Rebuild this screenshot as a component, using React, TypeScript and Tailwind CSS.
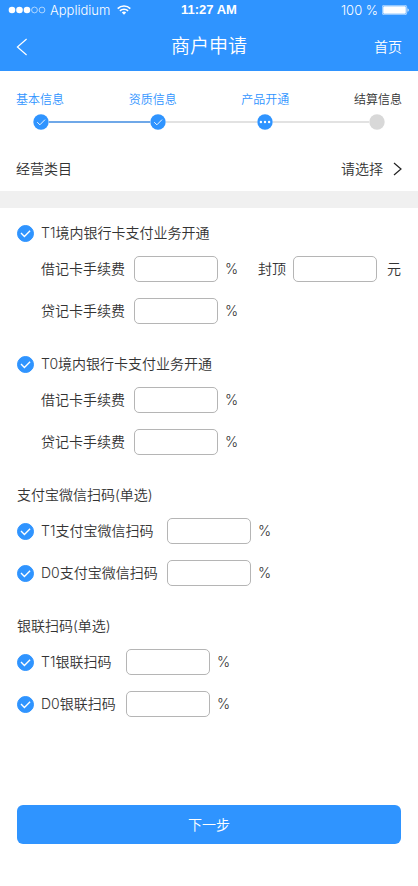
import { useState } from "react";

const steps = [
  { label: "基本信息", status: "done" },
  { label: "资质信息", status: "done" },
  { label: "产品开通", status: "current" },
  { label: "结算信息", status: "todo" },
];

const lines = ["flex-[101] bg-[#6fa8e8]", "flex-[92] bg-[#e2e2e2]", "flex-[96] bg-[#e2e2e2]"];

const StatusBar = () => (
  <div className="grid h-5 grid-cols-[1fr_auto_1fr] items-center px-2 text-[13px] font-light">
    <div className="flex items-center">
      <svg width="38" height="8" viewBox="0 0 38 8" fill="#fff" stroke="#fff">
        <circle cx="4" cy="4" r="3.3" stroke="none" />
        <circle cx="11.5" cy="4" r="3.3" stroke="none" />
        <circle cx="19" cy="4" r="3.3" stroke="none" />
        <circle cx="26.5" cy="4" r="2.9" fill="none" strokeWidth="0.6" />
        <circle cx="34" cy="4" r="2.9" fill="none" strokeWidth="0.6" />
      </svg>
      <span className="ml-1">Applidium</span>
      <svg className="ml-[7px]" width="14" height="10" viewBox="0 0 14 10" fill="none" stroke="#fff" strokeWidth="1.6">
        <path d="M0.7 3.6a9 9 0 0 1 12.6 0M2.9 5.9a5.9 5.9 0 0 1 8.2 0" />
        <path d="M7 9.8 4.8 7.6a3.2 3.2 0 0 1 4.4 0z" fill="#fff" stroke="none" />
      </svg>
    </div>
    <span className="font-['Liberation_Sans',sans-serif] font-bold">11:27 AM</span>
    <div className="flex items-center justify-end">
      <span>100 %</span>
      <svg className="ml-1" width="28" height="10" viewBox="0 0 28 10" fill="#fff">
        <rect x="0.3" y="0.3" width="24.4" height="9.4" rx="1.6" fill="none" stroke="#fff" strokeWidth="0.6" />
        <rect x="1.2" y="1.2" width="22.6" height="7.6" rx="0.8" />
        <path d="M25.6 3.2c1.4.4 1.4 3.2 0 3.6z" />
      </svg>
    </div>
  </div>
);

const StepDot = ({ status }: { status: string }) => (
  <svg className="shrink-0" width="16" height="16" viewBox="0 0 16 16" fill="none">
    <circle cx="8" cy="8" r="7.7" fill={status === "todo" ? "#d8d8d8" : "#2f94ff"} />
    {status === "done" && <path d="M4.2 8.2l2.7 2.6 5.1-5.2" stroke="#fff" strokeWidth="0.9" />}
    {status === "current" && (
      <g fill="#fff">
        <circle cx="3.9" cy="8" r="1.2" />
        <circle cx="8" cy="8" r="1.2" />
        <circle cx="12.1" cy="8" r="1.2" />
      </g>
    )}
  </svg>
);

const Check = ({ id }: { id: string }) => {
  const [checked, setChecked] = useState(true);
  return (
    <span className="mr-[7px] grid size-[17px] shrink-0">
      <input
        id={id}
        type="checkbox"
        checked={checked}
        onChange={(e) => setChecked(e.target.checked)}
        className="col-start-1 row-start-1 size-[17px] appearance-none rounded-full border border-[#b5b5b5] checked:border-[#2f94ff] checked:bg-[#2f94ff]"
      />
      {checked && (
        <svg className="pointer-events-none col-start-1 row-start-1" width="17" height="17" viewBox="0 0 17 17" fill="none">
          <path d="M4 8.1l3.4 3.3 5.7-5.6" stroke="#fff" strokeWidth="1.4" />
        </svg>
      )}
    </span>
  );
};

const RateInput = ({ id, label }: { id?: string; label?: string }) => (
  <input
    id={id}
    aria-label={label}
    type="text"
    inputMode="decimal"
    className="h-[26px] w-[84px] shrink-0 rounded-[5px] border border-[#b5b5b5] bg-white px-2 focus:border-[#2f94ff] focus:outline-none"
  />
);

const BankCard = ({ id, title, capped }: { id: string; title: string; capped?: boolean }) => (
  <section>
    <div className="flex h-[18px] items-center">
      <Check id={id} />
      <label htmlFor={id}>{title}</label>
    </div>
    <div className="mt-[14px] flex flex-col gap-4 pl-6">
      <div className="flex items-center">
        <label htmlFor={`${id}-debit`} className="w-[93px]">借记卡手续费</label>
        <RateInput id={`${id}-debit`} />
        <span className="ml-[7px]">%</span>
        {capped && (
          <div className="ml-auto flex items-center">
            <label htmlFor={`${id}-cap`} className="mr-[7px]">封顶</label>
            <RateInput id={`${id}-cap`} />
            <span className="ml-2.5">元</span>
          </div>
        )}
      </div>
      <div className="flex items-center">
        <label htmlFor={`${id}-credit`} className="w-[93px]">贷记卡手续费</label>
        <RateInput id={`${id}-credit`} />
        <span className="ml-[7px]">%</span>
      </div>
    </div>
  </section>
);

const ScanCode = ({ title, name, labelWidth }: { title: string; name: string; labelWidth: string }) => (
  <section>
    <h2 className="flex h-[18px] items-center">{title}</h2>
    <div className="mt-[14px] flex flex-col gap-4">
      {["T1", "D0"].map((type) => (
        <div key={type} className="flex items-center">
          <Check id={type + name} />
          <label htmlFor={type + name} className={labelWidth}>{type + name}</label>
          <RateInput label={`${type}${name}费率`} />
          <span className="ml-[7px]">%</span>
        </div>
      ))}
    </div>
  </section>
);

const App = () => {
  return (
    <div className="flex min-h-screen flex-col bg-white font-[Inter,'Noto_Sans_CJK_SC',sans-serif] text-sm font-[350] text-[#333]">
      <header className="bg-[#2f94ff] text-white">
        <StatusBar />
        <div className="grid h-[51px] grid-cols-[1fr_auto_1fr] items-center px-4 pt-[3px]">
          <button type="button" aria-label="返回" className="justify-self-start">
            <svg width="12" height="18" viewBox="0 0 12 18" fill="none" stroke="#fff" strokeWidth="1.2">
              <path d="M10.6 1 1.4 9l9.2 8" />
            </svg>
          </button>
          <h1 className="text-[19px]">商户申请</h1>
          <a href="#home" className="justify-self-end">首页</a>
        </div>
      </header>

      <div className="px-4 pt-[21px]">
        <div className="flex justify-between text-xs leading-4">
          {steps.map((step) => (
            <span key={step.label} className={step.status === "todo" ? "" : "text-[#2f94ff]"}>
              {step.label}
            </span>
          ))}
        </div>
        <div className="mt-1.5 flex items-center px-[17px]">
          {steps.map((step, i) => (
            <div key={step.label} className="contents">
              {i > 0 && <span className={`h-[2px] ${lines[i - 1]}`} />}
              <StepDot status={step.status} />
            </div>
          ))}
        </div>
      </div>

      <button type="button" className="mt-[17px] flex h-11 items-center px-4">
        <span>经营类目</span>
        <span className="ml-auto">请选择</span>
        <svg className="ml-2.5" width="9" height="14" viewBox="0 0 9 14" fill="none" stroke="#222" strokeWidth="1.2">
          <path d="M1 1l7 6-7 6" />
        </svg>
      </button>
      <div className="h-[17px] bg-[#f0f0f0]" />

      <main className="flex flex-col gap-[31px] px-[17px] pt-4">
        <BankCard id="t1" title="T1境内银行卡支付业务开通" capped />
        <BankCard id="t0" title="T0境内银行卡支付业务开通" />
        <ScanCode title="支付宝微信扫码(单选)" name="支付宝微信扫码" labelWidth="w-[126px]" />
        <ScanCode title="银联扫码(单选)" name="银联扫码" labelWidth="w-[85px]" />
      </main>

      <footer className="mt-auto px-[17px] pt-8 pb-[42px]">
        <button type="button" className="h-[39px] w-full rounded-md bg-[#2f94ff] text-white">
          下一步
        </button>
      </footer>
    </div>
  );
};

export default App;
